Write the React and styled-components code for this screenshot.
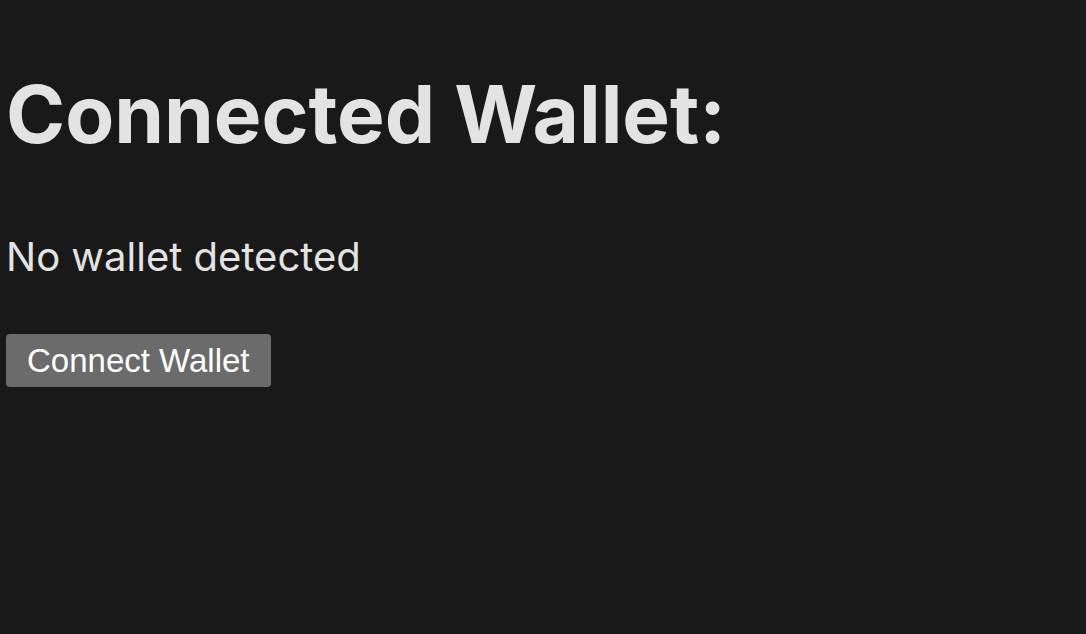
import React from 'react';
import styled, { createGlobalStyle } from 'styled-components';

const GlobalStyle = createGlobalStyle`
  html, body {
    margin: 0;
    padding: 0;
    background-color: #191919;
  }
  body {
    min-height: 100vh;
    font-family: Inter, "Noto Sans", sans-serif;
    color: #e3e3e3;
  }
`;

const Page = styled.main`
  display: flex;
  flex-direction: column;
  align-items: flex-start;
  padding: 66px 6px 0;
`;

const Title = styled.h1`
  margin: 0;
  font-size: 80px;
  font-weight: 700;
  line-height: 96px;
`;

const Status = styled.p`
  margin: 71px 0 0;
  font-size: 40px;
  font-weight: 400;
  line-height: 48px;
`;

const ConnectButton = styled.button`
  margin-top: 53px;
  height: 53px;
  padding: 0 21px;
  border: none;
  border-radius: 4px;
  background-color: #6b6b6b;
  color: #ffffff;
  font-family: "Liberation Sans", Arial, sans-serif;
  font-size: 33px;
  cursor: pointer;
`;

export default function App() {
  return (
    <>
      <GlobalStyle />
      <Page>
        <Title>Connected Wallet:</Title>
        <Status>No wallet detected</Status>
        <ConnectButton type="button">Connect Wallet</ConnectButton>
      </Page>
    </>
  );
}
